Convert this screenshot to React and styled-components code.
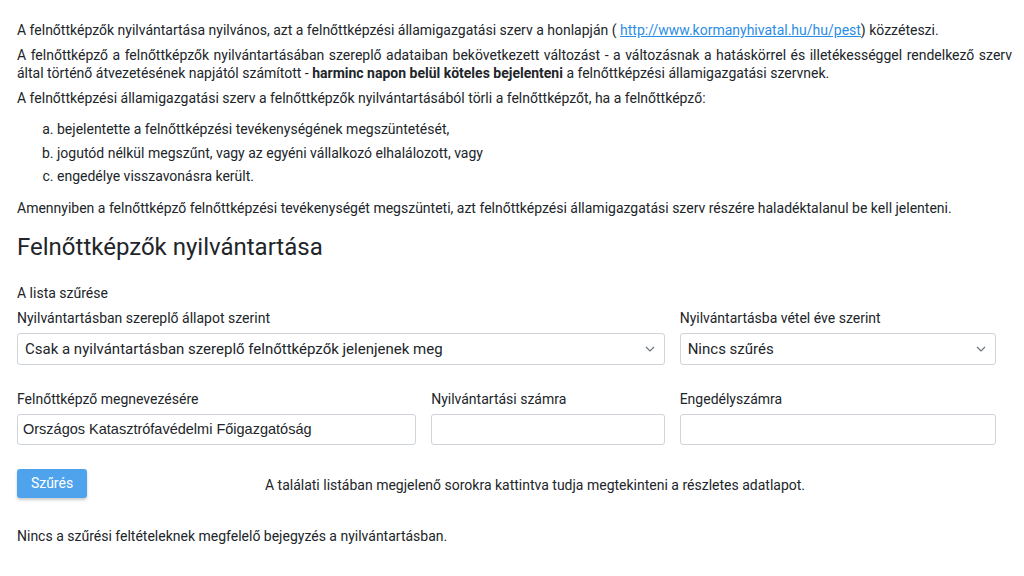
import styled, { createGlobalStyle } from 'styled-components';

const GlobalStyle = createGlobalStyle`
  body {
    margin: 0;
    background: #fff;
    font-family: Roboto, "Liberation Sans", sans-serif;
    font-size: 14px;
    color: #212529;
  }
`;

const Page = styled.div`
  padding: 21px 12px 0 17px;
  width: 995px;
`;

const Para = styled.p`
  margin: 0 0 7px;
  line-height: 18px;
  text-align: justify;

  a {
    color: #2b8ee6;
    text-decoration: underline;
  }
`;

const List = styled.ol`
  list-style: lower-alpha;
  margin: 11px 0 10px;
  padding-left: 40px;

  li {
    line-height: 23.5px;
  }
`;

const Heading = styled.h2`
  font-weight: 400;
  font-size: 24px;
  margin: 15px 0 22px;
  line-height: 30px;
`;

const FilterTitle = styled.div`
  margin-bottom: 7px;
  line-height: 18px;
`;

const Row = styled.div`
  display: grid;
  grid-template-columns: repeat(12, 1fr);
  column-gap: 15px;
  width: 979px;
  margin-bottom: 25px;
`;

const Field = styled.div`
  grid-column: span ${(p) => p.$span};
  display: flex;
  flex-direction: column;
`;

const Label = styled.label`
  line-height: 18px;
  margin-bottom: 6px;
`;

const SelectWrap = styled.div`
  position: relative;
  height: 32px;
`;

const Select = styled.select`
  appearance: none;
  width: 100%;
  height: 32px;
  border: 1px solid #ced4da;
  border-radius: 3px;
  background: #fff;
  font-family: Roboto, sans-serif;
  font-size: 15px;
  color: #212529;
  padding: 0 30px 0 7px;
`;

const Chevron = styled.svg`
  position: absolute;
  right: 10px;
  top: 13px;
  pointer-events: none;
`;

const Input = styled.input`
  box-sizing: border-box;
  width: 100%;
  height: 31px;
  border: 1px solid #ced4da;
  border-radius: 3px;
  font-family: "Liberation Sans", Arial, sans-serif;
  font-size: 14.5px;
  color: #212529;
  padding: 0 5px;
`;

const ActionRow = styled.div`
  display: flex;
  align-items: center;
  width: 979px;
  margin-top: -1px;
`;

const Button = styled.button`
  width: 70px;
  height: 29px;
  border: none;
  border-radius: 3px;
  background: #4ea3ec;
  color: #fff;
  font-family: Roboto, sans-serif;
  font-size: 14px;
  box-shadow: 0 2px 3px rgba(0, 0, 0, 0.2);
  cursor: pointer;
`;

const Hint = styled.div`
  flex: 1;
  text-align: center;
  padding-top: 4px;
  padding-right: 13px;
`;

const Empty = styled.p`
  margin: 29px 0 0;
  line-height: 18px;
`;

const SelectBox = ({ value }) => (
  <SelectWrap>
    <Select defaultValue={value}>
      <option>{value}</option>
    </Select>
    <Chevron width="10" height="6" viewBox="0 0 10 6">
      <path d="M1 1l4 4 4-4" fill="none" stroke="#6c757d" strokeWidth="1.2" />
    </Chevron>
  </SelectWrap>
);

const App = () => (
  <Page>
    <GlobalStyle />
    <Para>
      A felnőttképzők nyilvántartása nyilvános, azt a felnőttképzési államigazgatási szerv a honlapján ({' '}
      <a href="#">http://www.kormanyhivatal.hu/hu/pest</a>) közzéteszi.
    </Para>
    <Para>
      A felnőttképző a felnőttképzők nyilvántartásában szereplő adataiban bekövetkezett változást - a változásnak a
      hatáskörrel és illetékességgel rendelkező szerv által történő átvezetésének napjától számított -{' '}
      <strong>harminc napon belül köteles bejelenteni</strong> a felnőttképzési államigazgatási szervnek.
    </Para>
    <Para>
      A felnőttképzési államigazgatási szerv a felnőttképzők nyilvántartásából törli a felnőttképzőt, ha a
      felnőttképző:
    </Para>
    <List>
      <li>bejelentette a felnőttképzési tevékenységének megszüntetését,</li>
      <li>jogutód nélkül megszűnt, vagy az egyéni vállalkozó elhalálozott, vagy</li>
      <li>engedélye visszavonásra került.</li>
    </List>
    <Para>
      Amennyiben a felnőttképző felnőttképzési tevékenységét megszünteti, azt felnőttképzési államigazgatási szerv
      részére haladéktalanul be kell jelenteni.
    </Para>
    <Heading>Felnőttképzők nyilvántartása</Heading>
    <FilterTitle>A lista szűrése</FilterTitle>
    <Row>
      <Field $span={8}>
        <Label>Nyilvántartásban szereplő állapot szerint</Label>
        <SelectBox value="Csak a nyilvántartásban szereplő felnőttképzők jelenjenek meg" />
      </Field>
      <Field $span={4}>
        <Label>Nyilvántartásba vétel éve szerint</Label>
        <SelectBox value="Nincs szűrés" />
      </Field>
    </Row>
    <Row>
      <Field $span={5}>
        <Label>Felnőttképző megnevezésére</Label>
        <Input defaultValue="Országos Katasztrófavédelmi Főigazgatóság" />
      </Field>
      <Field $span={3}>
        <Label>Nyilvántartási számra</Label>
        <Input />
      </Field>
      <Field $span={4}>
        <Label>Engedélyszámra</Label>
        <Input />
      </Field>
    </Row>
    <ActionRow>
      <Button>Szűrés</Button>
      <Hint>A találati listában megjelenő sorokra kattintva tudja megtekinteni a részletes adatlapot.</Hint>
    </ActionRow>
    <Empty>Nincs a szűrési feltételeknek megfelelő bejegyzés a nyilvántartásban.</Empty>
  </Page>
);

export default App;
